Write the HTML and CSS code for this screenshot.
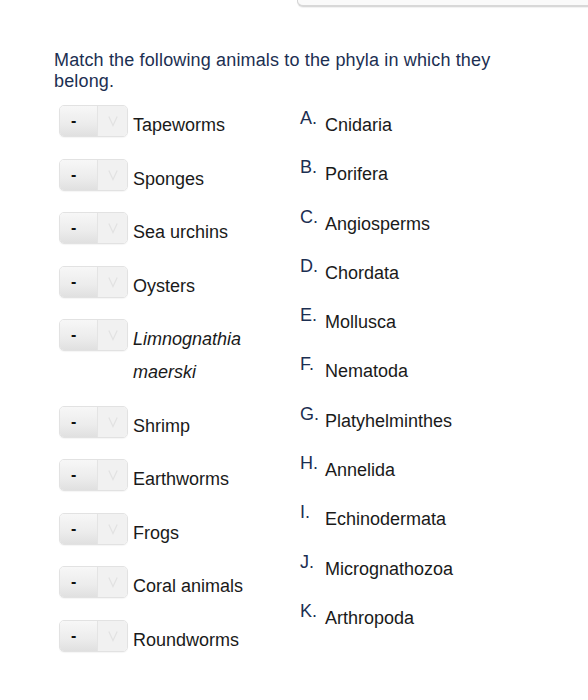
FILE: index.html
```html
<!DOCTYPE html>
<html>
<head>
<meta charset="utf-8">
<link rel="stylesheet" href="styles.css">
</head>
<body>
<div class="topbox"></div>
<div class="page">
  <p class="prompt">Match the following animals to the phyla in which they belong.</p>
  <div class="match">
    <div class="left">
      <div class="row"><div class="sel"><span class="val">-</span><span class="arr"><svg width="10" height="12" viewBox="0 0 10 12"><path d="M0.8 1.5 L5 10.5 L9.2 1.5" fill="none" stroke="#e2e2e2" stroke-width="1.2"/></svg></span></div><span class="lbl">Tapeworms</span></div>
      <div class="row"><div class="sel"><span class="val">-</span><span class="arr"><svg width="10" height="12" viewBox="0 0 10 12"><path d="M0.8 1.5 L5 10.5 L9.2 1.5" fill="none" stroke="#e2e2e2" stroke-width="1.2"/></svg></span></div><span class="lbl">Sponges</span></div>
      <div class="row"><div class="sel"><span class="val">-</span><span class="arr"><svg width="10" height="12" viewBox="0 0 10 12"><path d="M0.8 1.5 L5 10.5 L9.2 1.5" fill="none" stroke="#e2e2e2" stroke-width="1.2"/></svg></span></div><span class="lbl">Sea urchins</span></div>
      <div class="row"><div class="sel"><span class="val">-</span><span class="arr"><svg width="10" height="12" viewBox="0 0 10 12"><path d="M0.8 1.5 L5 10.5 L9.2 1.5" fill="none" stroke="#e2e2e2" stroke-width="1.2"/></svg></span></div><span class="lbl">Oysters</span></div>
      <div class="row"><div class="sel"><span class="val">-</span><span class="arr"><svg width="10" height="12" viewBox="0 0 10 12"><path d="M0.8 1.5 L5 10.5 L9.2 1.5" fill="none" stroke="#e2e2e2" stroke-width="1.2"/></svg></span></div><span class="lbl"><em>Limnognathia<br>maerski</em></span></div>
      <div class="row"><div class="sel"><span class="val">-</span><span class="arr"><svg width="10" height="12" viewBox="0 0 10 12"><path d="M0.8 1.5 L5 10.5 L9.2 1.5" fill="none" stroke="#e2e2e2" stroke-width="1.2"/></svg></span></div><span class="lbl">Shrimp</span></div>
      <div class="row"><div class="sel"><span class="val">-</span><span class="arr"><svg width="10" height="12" viewBox="0 0 10 12"><path d="M0.8 1.5 L5 10.5 L9.2 1.5" fill="none" stroke="#e2e2e2" stroke-width="1.2"/></svg></span></div><span class="lbl">Earthworms</span></div>
      <div class="row"><div class="sel"><span class="val">-</span><span class="arr"><svg width="10" height="12" viewBox="0 0 10 12"><path d="M0.8 1.5 L5 10.5 L9.2 1.5" fill="none" stroke="#e2e2e2" stroke-width="1.2"/></svg></span></div><span class="lbl">Frogs</span></div>
      <div class="row"><div class="sel"><span class="val">-</span><span class="arr"><svg width="10" height="12" viewBox="0 0 10 12"><path d="M0.8 1.5 L5 10.5 L9.2 1.5" fill="none" stroke="#e2e2e2" stroke-width="1.2"/></svg></span></div><span class="lbl">Coral animals</span></div>
      <div class="row"><div class="sel"><span class="val">-</span><span class="arr"><svg width="10" height="12" viewBox="0 0 10 12"><path d="M0.8 1.5 L5 10.5 L9.2 1.5" fill="none" stroke="#e2e2e2" stroke-width="1.2"/></svg></span></div><span class="lbl">Roundworms</span></div>
    </div>
    <div class="right">
      <div class="opt"><span class="ltr">A.</span><span class="otxt">Cnidaria</span></div>
      <div class="opt"><span class="ltr">B.</span><span class="otxt">Porifera</span></div>
      <div class="opt"><span class="ltr">C.</span><span class="otxt">Angiosperms</span></div>
      <div class="opt"><span class="ltr">D.</span><span class="otxt">Chordata</span></div>
      <div class="opt"><span class="ltr">E.</span><span class="otxt">Mollusca</span></div>
      <div class="opt"><span class="ltr">F.</span><span class="otxt">Nematoda</span></div>
      <div class="opt"><span class="ltr">G.</span><span class="otxt">Platyhelminthes</span></div>
      <div class="opt"><span class="ltr">H.</span><span class="otxt">Annelida</span></div>
      <div class="opt"><span class="ltr">I.</span><span class="otxt">Echinodermata</span></div>
      <div class="opt"><span class="ltr">J.</span><span class="otxt">Micrognathozoa</span></div>
      <div class="opt"><span class="ltr">K.</span><span class="otxt">Arthropoda</span></div>
    </div>
  </div>
</div>
</body>
</html>
```

FILE: styles.css
```css
html, body {
  margin: 0;
  padding: 0;
  background: #ffffff;
}
body {
  font-family: "Liberation Sans", Arial, sans-serif;
  color: #1a1a1a;
}
.topbox {
  margin-left: 297px;
  height: 5px;
  border: 1px solid #d4d4d4;
  border-top: none;
  border-right: none;
  border-bottom: 2px solid #d8d8d8;
  border-bottom-left-radius: 6px;
  background: #fafafa;
  box-shadow: 0 1px 1px rgba(0,0,0,0.06);
}
.page {
  padding-left: 54px;
}
.prompt {
  margin: 43px 0 0 0;
  font-size: 18px;
  line-height: 21px;
  color: #1c2f52;
  width: 470px;
  letter-spacing: 0.15px;
}
.match {
  display: flex;
  margin-top: 13px;
}
.left {
  width: 241px;
  padding-left: 5px;
  display: flex;
  flex-direction: column;
  gap: 16.5px;
}
.row {
  display: flex;
  align-items: flex-start;
}
.sel {
  width: 67px;
  height: 30px;
  border: 1px solid #e2e2e2;
  border-radius: 5px;
  display: flex;
  overflow: hidden;
  flex-shrink: 0;
  box-shadow: 0 1px 1px rgba(0,0,0,0.04);
}
.val {
  width: 38px;
  background: linear-gradient(to bottom, #f7f7f7 0%, #ececec 60%, #e0e0e0 100%);
  border-right: 1px solid #e4e4e4;
  font-size: 16px;
  line-height: 30px;
  color: #111;
  padding-left: 11px;
  box-sizing: border-box;
  font-weight: bold;
}
.arr {
  flex: 1;
  background: #f1f1f1;
  display: flex;
  justify-content: center;
  padding-top: 9px;
  box-sizing: border-box;
}
.arr svg {
  display: block;
}
.lbl {
  margin-left: 5px;
  margin-top: 4px;
  font-size: 18px;
  line-height: 33px;
  color: #1a1a1a;
}
.lbl em {
  font-style: italic;
}
.right {
  display: flex;
  flex-direction: column;
  gap: 16.3px;
  padding-top: 4px;
}
.opt {
  display: flex;
  align-items: flex-start;
  height: 33px;
  font-size: 18px;
  line-height: 33px;
}
.ltr {
  width: 25px;
  color: #1c2f52;
  position: relative;
  top: -7px;
}
.otxt {
  color: #1a1a1a;
}
```
